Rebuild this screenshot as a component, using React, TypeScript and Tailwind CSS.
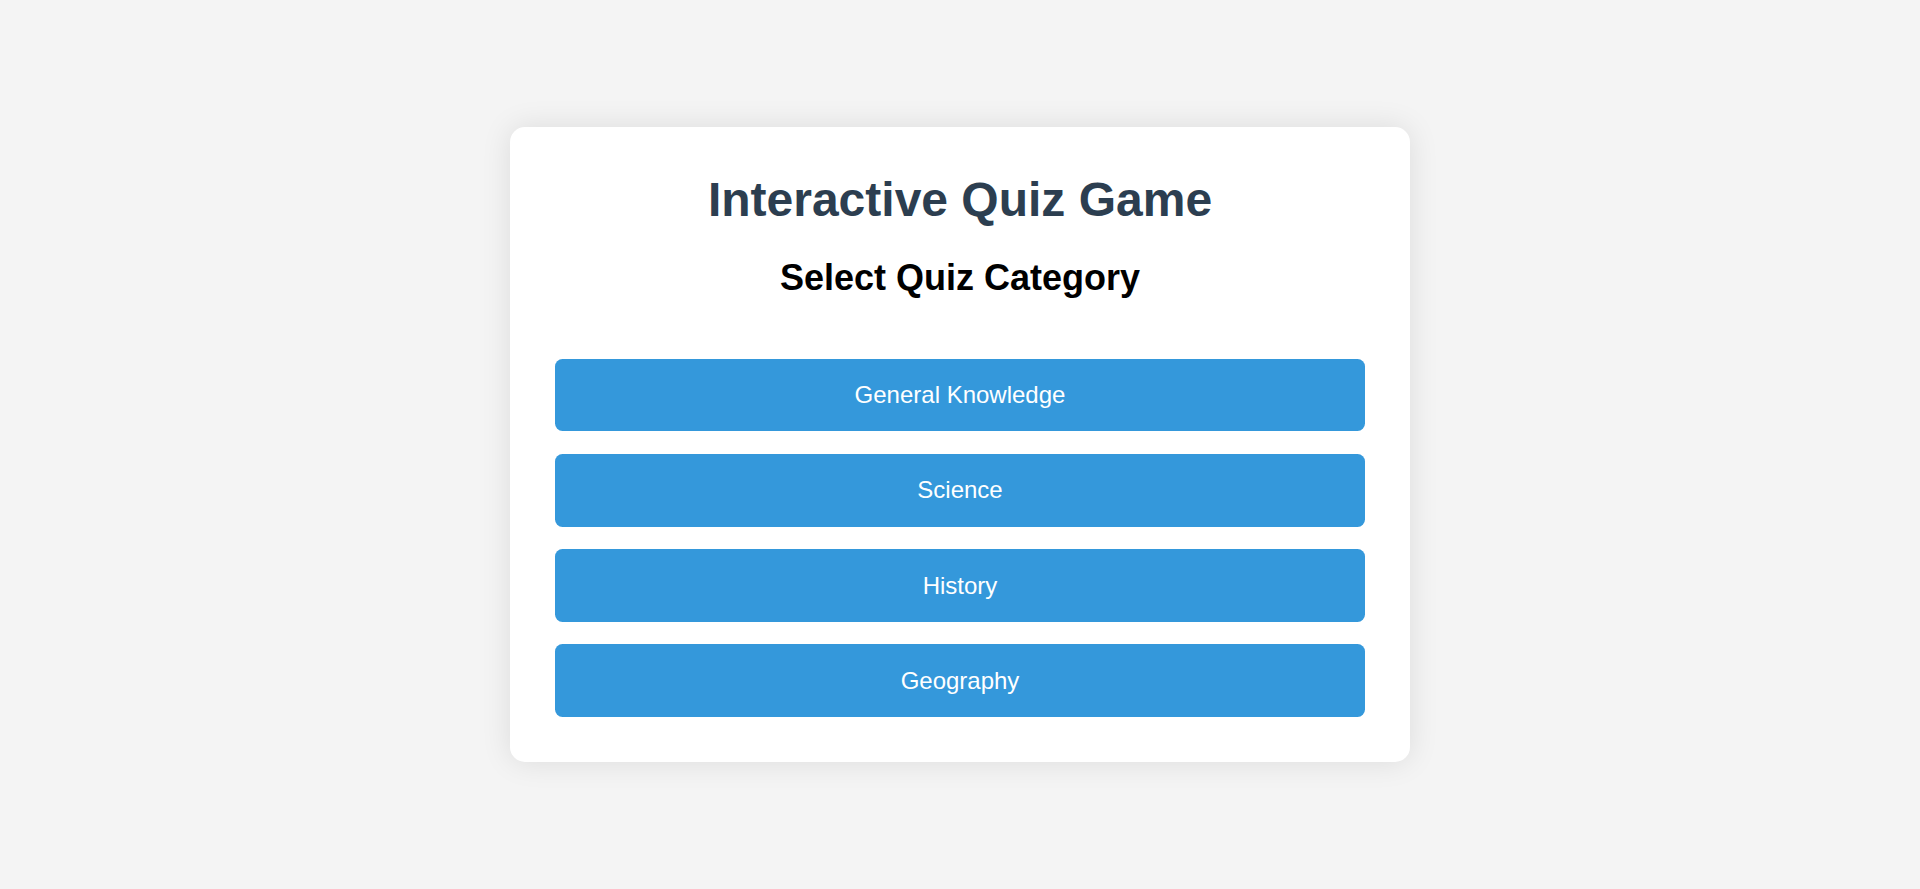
import React from "react";

const categories = ["General Knowledge", "Science", "History", "Geography"];

export default function App() {
  return (
    <div
      className="min-h-screen w-full bg-[#f4f4f4] flex items-center justify-center"
      style={{ fontFamily: '"Liberation Sans", Arial, sans-serif' }}
    >
      <div className="w-[900px] bg-white rounded-[15px] p-[45px] shadow-[0_0_30px_rgba(0,0,0,0.1)] text-center">
        <h1 className="text-[48px] leading-[1.15] font-bold text-[#2c3e50] mb-[30px]">
          Interactive Quiz Game
        </h1>
        <h2 className="text-[36px] leading-[1.15] font-bold text-black mb-[60px]">
          Select Quiz Category
        </h2>
        <div className="flex flex-col gap-[22.5px]">
          {categories.map((c) => (
            <button
              key={c}
              className="w-full bg-[#3498db] text-white text-[24px] leading-[1.15] py-[22.5px] rounded-[7.5px]"
            >
              {c}
            </button>
          ))}
        </div>
      </div>
    </div>
  );
}
